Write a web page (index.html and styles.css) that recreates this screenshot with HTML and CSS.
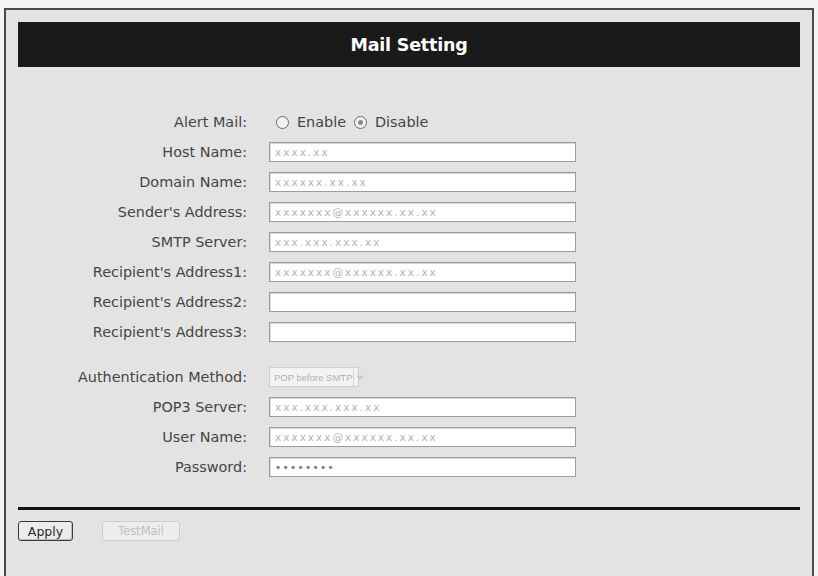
FILE: index.html
```html
<!DOCTYPE html>
<html>
<head>
<meta charset="utf-8">
<link rel="stylesheet" href="styles.css">
</head>
<body>
<div class="panel">
  <div class="header">Mail Setting</div>
  <div class="form">
    <div class="label">Alert Mail:</div>
    <div class="ctrl radios">
      <span class="radio"></span><span class="rlabel">Enable</span>
      <span class="radio on"></span><span class="rlabel">Disable</span>
    </div>
    <div class="label">Host Name:</div>
    <div class="ctrl"><div class="input">xxxx.xx</div></div>
    <div class="label">Domain Name:</div>
    <div class="ctrl"><div class="input">xxxxxx.xx.xx</div></div>
    <div class="label">Sender's Address:</div>
    <div class="ctrl"><div class="input">xxxxxxx@xxxxxx.xx.xx</div></div>
    <div class="label">SMTP Server:</div>
    <div class="ctrl"><div class="input">xxx.xxx.xxx.xx</div></div>
    <div class="label">Recipient's Address1:</div>
    <div class="ctrl"><div class="input">xxxxxxx@xxxxxx.xx.xx</div></div>
    <div class="label">Recipient's Address2:</div>
    <div class="ctrl"><div class="input"></div></div>
    <div class="label">Recipient's Address3:</div>
    <div class="ctrl"><div class="input"></div></div>
    <div class="spacer"></div>
    <div class="label">Authentication Method:</div>
    <div class="ctrl"><div class="select"><span class="stext">POP before SMTP</span><span class="sarrow"><svg width="8" height="6" viewBox="0 0 8 6"><path d="M1 1.5 L4 4.5 L7 1.5" fill="none" stroke="#bbb" stroke-width="1.2"/></svg></span></div></div>
    <div class="label">POP3 Server:</div>
    <div class="ctrl"><div class="input">xxx.xxx.xxx.xx</div></div>
    <div class="label">User Name:</div>
    <div class="ctrl"><div class="input">xxxxxxx@xxxxxx.xx.xx</div></div>
    <div class="label">Password:</div>
    <div class="ctrl"><div class="input pw">••••••••</div></div>
  </div>
  <div class="sep"></div>
  <div class="buttons">
    <div class="btn">Apply</div>
    <div class="btn disabled">TestMail</div>
  </div>
</div>
</body>
</html>
```
FILE: styles.css
```css
html, body {
  margin: 0;
  padding: 0;
  background: #f4f4f4;
  height: 100%;
  overflow: hidden;
}
.panel {
  box-sizing: border-box;
  margin: 8px 4px 0 4px;
  height: 580px;
  background: #e3e3e3;
  border: 2px solid #4a4a4a;
  border-bottom: none;
  padding: 12px 12px 0 12px;
  font-family: "DejaVu Sans", Verdana, sans-serif;
}
.header {
  height: 45px;
  background: #1a1a1a;
  color: #fff;
  font-weight: bold;
  font-size: 17.5px;
  letter-spacing: -0.2px;
  display: flex;
  align-items: center;
  justify-content: center;
}
.form {
  display: grid;
  grid-template-columns: 229px 307px;
  grid-template-rows: repeat(8, 30px) 15px repeat(4, 30px);
  column-gap: 22px;
  margin-top: 40px;
}
.label {
  text-align: right;
  font-size: 14.4px;
  color: #454545;
  display: flex;
  align-items: center;
  justify-content: flex-end;
  white-space: nowrap;
}
.ctrl {
  display: flex;
  align-items: center;
}
.spacer {
  grid-column: 1 / 3;
}
.input {
  box-sizing: border-box;
  width: 307px;
  height: 20px;
  background: #fff;
  border: 1px solid #9c9c9c;
  box-shadow: inset 1px 1px 0 #d8d8d8;
  font-size: 10.5px;
  letter-spacing: 2px;
  color: #b4b4b4;
  padding: 0 5px;
  display: flex;
  align-items: center;
  font-family: "DejaVu Sans", Verdana, sans-serif;
}
.input.pw {
  color: #777;
  font-size: 10.5px;
  letter-spacing: 1.3px;
}
.radios {
  font-size: 14.4px;
  color: #454545;
}
.radio {
  box-sizing: border-box;
  width: 13px;
  height: 13px;
  border-radius: 50%;
  border: 1px solid #6a6a6a;
  background: #f2f2f2;
  margin-left: 7px;
  margin-right: 8px;
  position: relative;
  display: inline-block;
}
.radio.on::after {
  content: "";
  position: absolute;
  left: 3px;
  top: 3px;
  width: 5px;
  height: 5px;
  border-radius: 50%;
  background: #8a8a8a;
}
.rlabel + .radio { margin-left: 8px; }
.select {
  box-sizing: border-box;
  width: 90px;
  height: 20px;
  border: 1px solid #cfcfcf;
  background: #f3f3f3;
  display: flex;
  align-items: center;
  font-family: "Liberation Sans", Arial, sans-serif;
  font-size: 9.5px;
  color: #b0b0b0;
}
.stext {
  flex: 1;
  padding-left: 4px;
  white-space: nowrap;
}
.sarrow {
  flex: none;
  width: 12px;
  height: 18px;
  border-left: 1px solid #d6d6d6;
  display: flex;
  align-items: center;
  justify-content: center;
}
.sep {
  height: 3px;
  background: #111;
  margin-top: 25px;
}
.buttons {
  display: flex;
  gap: 29px;
  margin-top: 11px;
}
.btn {
  box-sizing: border-box;
  height: 20px;
  width: 55px;
  border: 1px solid #3a3a3a;
  border-radius: 3px;
  background: #ececec;
  box-shadow: inset -1px -1px 0 #bcbcbc;
  font-size: 12.5px;
  color: #2a2a2a;
  display: flex;
  align-items: center;
  justify-content: center;
}
.btn.disabled {
  width: 78px;
  border-color: #cdcdcd;
  box-shadow: none;
  background: #ededed;
  color: #c0c0c0;
  font-size: 11.5px;
}
```
